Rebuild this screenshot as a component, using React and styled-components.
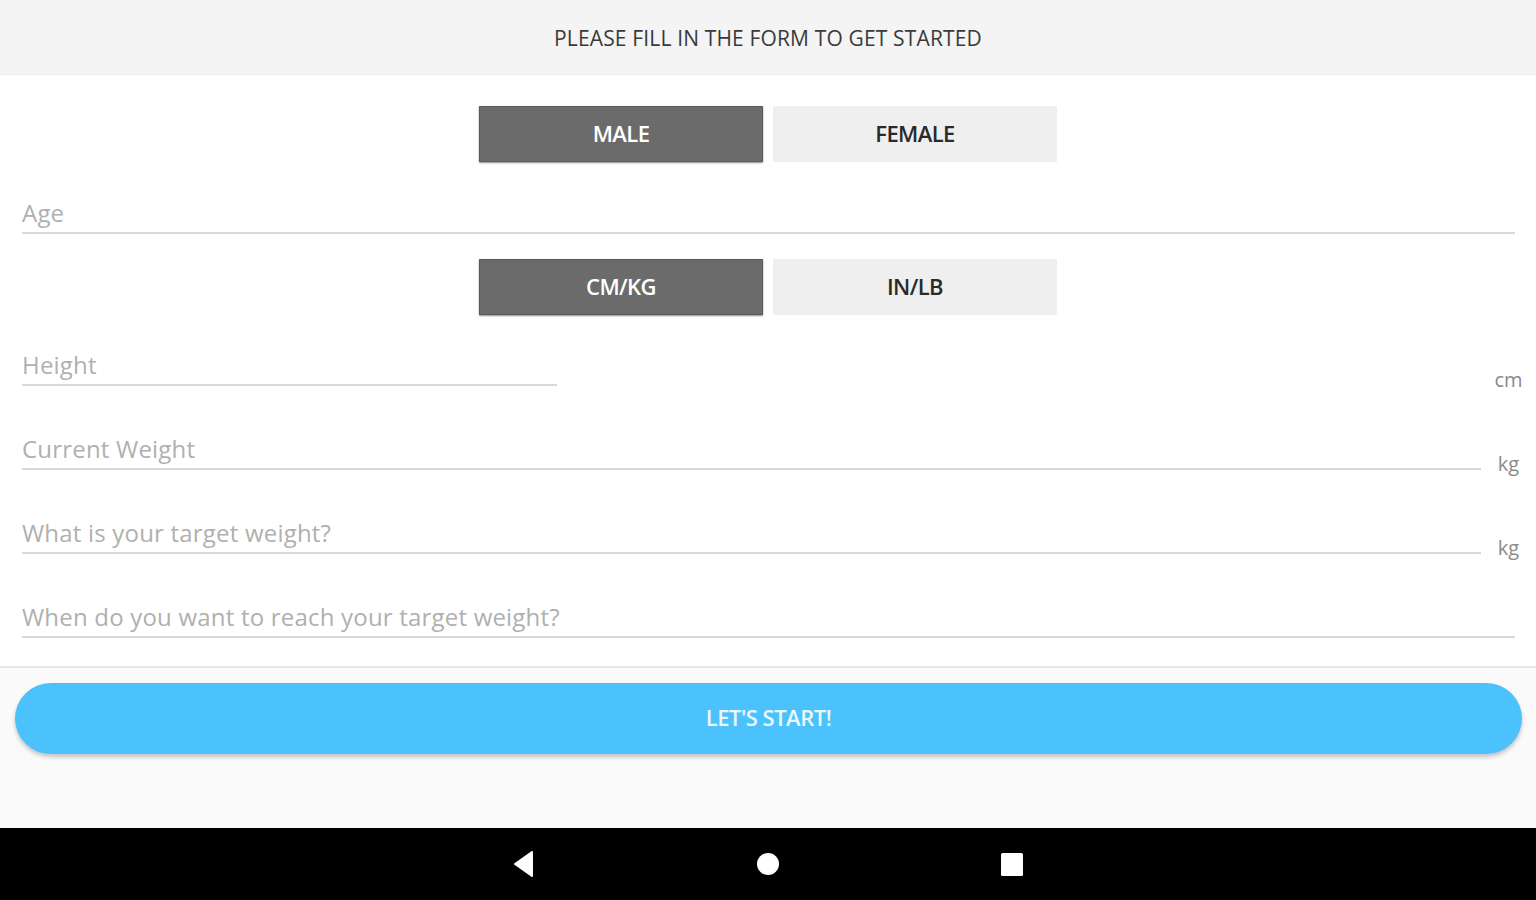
import React, { useState } from "react";
import styled, { createGlobalStyle } from "styled-components";

const Global = createGlobalStyle`
  html, body { margin: 0; padding: 0; }
  body { background: #fafafa; font-family: "Open Sans", "Noto Sans", sans-serif; }
  * { box-sizing: border-box; }
`;

const Screen = styled.div`
  width: 1536px;
  height: 900px;
  display: flex;
  flex-direction: column;
  background: #fafafa;
  overflow: hidden;
`;

const Header = styled.header`
  height: 75px;
  flex: none;
  display: flex;
  align-items: center;
  justify-content: center;
  background: #f4f4f4;
  border-bottom: 1px solid #ebebeb;
  color: #3a3a3a;
  font-size: 21px;
  letter-spacing: 0.15px;
  text-transform: uppercase;
  padding-top: 1px;
`;

const Card = styled.section`
  flex: none;
  background: #ffffff;
  border-bottom: 2px solid #e6e6e6;
  padding: 31px 0 28px;
  display: flex;
  flex-direction: column;
`;

const ToggleRow = styled.div`
  display: flex;
  justify-content: center;
  gap: 10px;
  margin-top: ${(p) => p.$mt || 0}px;
`;

const Toggle = styled.button`
  width: 284px;
  height: 56px;
  border: none;
  border-radius: 1px;
  padding: 0 0 3px;
  font-family: inherit;
  font-size: 22px;
  font-weight: 600;
  letter-spacing: -0.6px;
  cursor: pointer;
  background: ${(p) => (p.$active ? "#6b6b6b" : "#efefef")};
  color: ${(p) => (p.$active ? "#ffffff" : "#2a2a2a")};
  box-shadow: ${(p) =>
    p.$active ? "0 1px 2px rgba(0,0,0,0.45), inset 0 0 0 1px #5a5a5a" : "none"};
`;

const FieldRow = styled.div`
  display: flex;
  align-items: flex-end;
  margin-top: ${(p) => p.$mt}px;
  padding-left: 22px;
  padding-right: ${(p) => (p.$unit ? 0 : 21)}px;
`;

const Field = styled.div`
  flex: ${(p) => (p.$width ? "none" : "1")};
  width: ${(p) => (p.$width ? `${p.$width}px` : "auto")};
  padding-bottom: 4px;
  border-bottom: 2px solid #d9d9d9;
`;

const Label = styled.div`
  font-size: 24px;
  line-height: 30px;
  color: #b0b0b0;
  letter-spacing: 0.2px;
`;

const Spacer = styled.div`
  flex: 1;
`;

const Unit = styled.div`
  width: 55px;
  flex: none;
  text-align: center;
  font-size: 20px;
  line-height: 24px;
  color: #8a8a8a;
  margin-bottom: -6px;
`;

const Footer = styled.div`
  flex: 1;
  padding: 15px 14px 0 15px;
`;

const StartButton = styled.button`
  width: 100%;
  height: 71px;
  border: none;
  border-radius: 36px;
  padding: 0 0 3px;
  background: #4cc2fc;
  color: #eaf7ff;
  font-family: inherit;
  font-size: 22px;
  font-weight: 600;
  letter-spacing: -0.5px;
  box-shadow: 0 3px 4px rgba(0, 0, 0, 0.22);
  cursor: pointer;
`;

const NavBar = styled.nav`
  height: 72px;
  flex: none;
  background: #000;
  display: flex;
  align-items: center;
  justify-content: center;
  gap: 200px;
`;

const NavIcon = styled.div`
  width: 44px;
  height: 44px;
  display: flex;
  align-items: center;
  justify-content: center;
`;

export default function App() {
  const [sex, setSex] = useState("male");
  const [units, setUnits] = useState("metric");
  return (
    <>
      <Global />
      <Screen>
        <Header>Please fill in the form to get started</Header>
        <Card>
          <ToggleRow>
            <Toggle $active={sex === "male"} onClick={() => setSex("male")}>MALE</Toggle>
            <Toggle $active={sex === "female"} onClick={() => setSex("female")}>FEMALE</Toggle>
          </ToggleRow>
          <FieldRow $mt={36}>
            <Field><Label>Age</Label></Field>
          </FieldRow>
          <ToggleRow $mt={25}>
            <Toggle $active={units === "metric"} onClick={() => setUnits("metric")}>CM/KG</Toggle>
            <Toggle $active={units === "imperial"} onClick={() => setUnits("imperial")}>IN/LB</Toggle>
          </ToggleRow>
          <FieldRow $mt={35} $unit>
            <Field $width={535}><Label>Height</Label></Field>
            <Spacer />
            <Unit>cm</Unit>
          </FieldRow>
          <FieldRow $mt={48} $unit>
            <Field><Label>Current Weight</Label></Field>
            <Unit>kg</Unit>
          </FieldRow>
          <FieldRow $mt={48} $unit>
            <Field><Label>What is your target weight?</Label></Field>
            <Unit>kg</Unit>
          </FieldRow>
          <FieldRow $mt={48}>
            <Field><Label>When do you want to reach your target weight?</Label></Field>
          </FieldRow>
        </Card>
        <Footer>
          <StartButton>LET'S START!</StartButton>
        </Footer>
        <NavBar>
          <NavIcon>
            <svg width="24" height="26" viewBox="0 0 24 26">
              <path d="M20 1 L20 25 L3 13 Z" fill="#fff" strokeLinejoin="round" stroke="#fff" strokeWidth="2" />
            </svg>
          </NavIcon>
          <NavIcon>
            <svg width="24" height="24" viewBox="0 0 24 24">
              <circle cx="12" cy="12" r="11" fill="#fff" />
            </svg>
          </NavIcon>
          <NavIcon>
            <svg width="24" height="24" viewBox="0 0 24 24">
              <rect x="1" y="1" width="22" height="23" rx="1.5" fill="#fff" />
            </svg>
          </NavIcon>
        </NavBar>
      </Screen>
    </>
  );
}
